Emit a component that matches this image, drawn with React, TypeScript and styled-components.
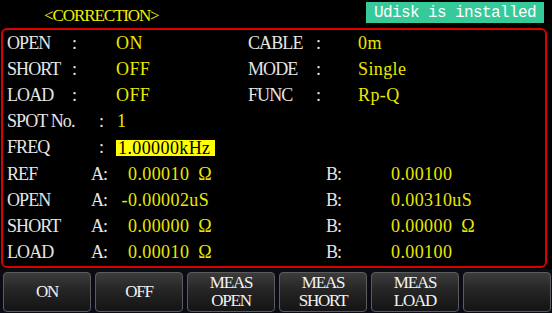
import React from "react";
import styled, { createGlobalStyle } from "styled-components";

const Global = createGlobalStyle`
  html, body { margin: 0; padding: 0; background: #000; }
  #root { width: 552px; height: 313px; }
`;

const Screen = styled.div`
  width: 552px;
  height: 313px;
  background: #000;
  display: flex;
  flex-direction: column;
  font-family: "Liberation Serif", serif;
  font-size: 18px;
  overflow: hidden;
`;

const Header = styled.div`
  height: 28px;
  display: flex;
  justify-content: space-between;
  align-items: flex-start;
`;

const Title = styled.div`
  color: #f0f000;
  padding-left: 44px;
  line-height: 31px;
  font-size: 17px;
  letter-spacing: -1.1px;
`;

const Badge = styled.div`
  margin-top: 2px;
  margin-right: 8px;
  height: 21px;
  line-height: 22px;
  padding: 0 8px;
  background: #36c99a;
  color: #ffffff;
  font-family: "Liberation Mono", monospace;
  font-size: 16px;
  letter-spacing: -0.6px;
`;

const Panel = styled.div`
  margin: 0 5px 0 1px;
  border: 2px solid #d80000;
  border-radius: 6px;
  padding-left: 4px;
  display: grid;
  grid-auto-rows: 26.2px;
`;

const Row = styled.div`
  display: flex;
  align-items: center;
  white-space: pre;
`;

const Cell = styled.span<{ $w?: number; $tone?: "label" | "value"; $right?: boolean }>`
  flex: 0 0 ${(p) => (p.$w ? `${p.$w}px` : "auto")};
  color: ${(p) => (p.$tone === "value" ? "#e8e800" : "#e6e6e6")};
  letter-spacing: ${(p) => (p.$tone === "value" ? "0.4px" : "-0.9px")};
  text-align: ${(p) => (p.$right ? "right" : "left")};
`;

const Unit = styled.span<{ $gap?: boolean }>`
  margin-left: ${(p) => (p.$gap ? "9px" : "0")};
`;

const Highlight = styled.span`
  background: #ffff00;
  color: #000;
  padding: 0 4px 0 2px;
  line-height: 16px;
  letter-spacing: 0.4px;
`;

const Bar = styled.div`
  flex: 1;
  background: #0b0b16;
  display: grid;
  grid-template-columns: repeat(6, 88px);
  gap: 4px;
  padding: 3px 0 3px 3px;
  margin-top: 1px;
`;

const Key = styled.div`
  height: 40px;
  box-sizing: border-box;
  border: 1px solid #5c5c5c;
  border-radius: 4px;
  background: linear-gradient(#3c3c3c 0%, #252525 45%, #141414 100%);
  color: #f2f2f2;
  display: flex;
  flex-direction: column;
  align-items: center;
  justify-content: center;
  line-height: 18px;
  font-size: 17px;
  letter-spacing: -1.2px;
`;

type Top = [string, string, string, string];
const topRows: Top[] = [
  ["OPEN", "ON", "CABLE", "0m"],
  ["SHORT", "OFF", "MODE", "Single"],
  ["LOAD", "OFF", "FUNC", "Rp-Q"],
];

type Val = { n: string; u?: string };
type Corr = { label: string; sign: string; a: Val; b: Val };
const corrRows: Corr[] = [
  { label: "REF", sign: "", a: { n: "0.00010", u: "Ω" }, b: { n: "0.00100" } },
  { label: "OPEN", sign: "-", a: { n: "0.00002", u: "uS" }, b: { n: "0.00310", u: "uS" } },
  { label: "SHORT", sign: "", a: { n: "0.00000", u: "Ω" }, b: { n: "0.00000", u: "Ω" } },
  { label: "LOAD", sign: "", a: { n: "0.00010", u: "Ω" }, b: { n: "0.00100" } },
];

const Value = ({ v }: { v: Val }) => (
  <>
    {v.n}
    {v.u && <Unit $gap={v.u === "Ω"}>{v.u}</Unit>}
  </>
);

const keys: string[][] = [["ON"], ["OFF"], ["MEAS", "OPEN"], ["MEAS", "SHORT"], ["MEAS", "LOAD"], []];

export default function App() {
  return (
    <>
      <Global />
      <Screen>
        <Header>
          <Title>&lt;CORRECTION&gt;</Title>
          <Badge>Udisk is installed</Badge>
        </Header>
        <Panel>
          {topRows.map(([a, b, c, d]) => (
            <Row key={a}>
              <Cell $w={65}>{a}</Cell>
              <Cell $w={44}>:</Cell>
              <Cell $w={132} $tone="value">{b}</Cell>
              <Cell $w={68}>{c}</Cell>
              <Cell $w={42}>:</Cell>
              <Cell $tone="value">{d}</Cell>
            </Row>
          ))}
          <Row>
            <Cell $w={92}>SPOT No.</Cell>
            <Cell $w={18}>:</Cell>
            <Cell $tone="value">1</Cell>
          </Row>
          <Row>
            <Cell $w={92}>FREQ</Cell>
            <Cell $w={17}>:</Cell>
            <Highlight>1.00000kHz</Highlight>
          </Row>
          {corrRows.map((r) => (
            <Row key={r.label}>
              <Cell $w={84}>{r.label}</Cell>
              <Cell $w={27}>A:</Cell>
              <Cell $w={10} $tone="value" $right>{r.sign}</Cell>
              <Cell $w={198} $tone="value"><Value v={r.a} /></Cell>
              <Cell $w={65}>B:</Cell>
              <Cell $tone="value"><Value v={r.b} /></Cell>
            </Row>
          ))}
        </Panel>
        <Bar>
          {keys.map((lines, i) => (
            <Key key={i}>
              {lines.map((l) => (
                <span key={l}>{l}</span>
              ))}
            </Key>
          ))}
        </Bar>
      </Screen>
    </>
  );
}
